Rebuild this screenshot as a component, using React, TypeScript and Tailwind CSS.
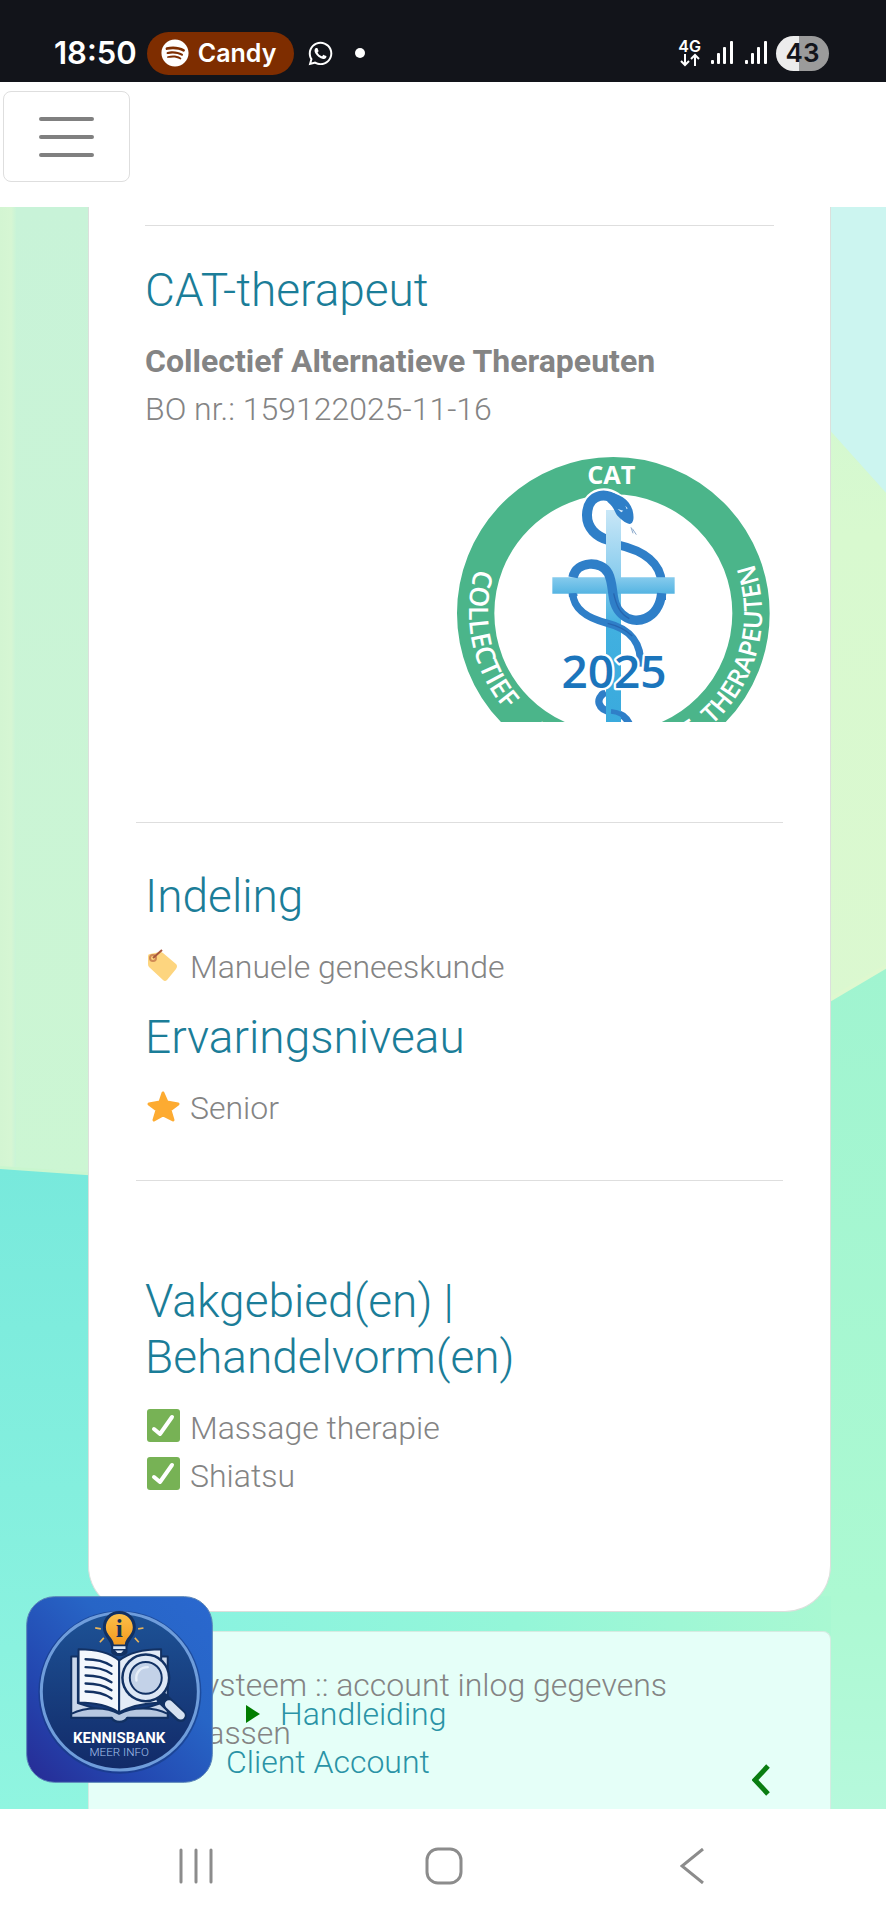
import React from "react";
import { FaSpotify, FaWhatsapp } from "react-icons/fa";

const treatments = ["Massage therapie", "Shiatsu"];

function SignalBars() {
  return (
    <svg viewBox="0 0 22 24" className="h-6 w-[22px]" fill="#fff">
      <rect x="0" y="19" width="3" height="4" rx="1" />
      <rect x="6" y="12" width="3" height="11" rx="1" />
      <rect x="12" y="6" width="3" height="17" rx="1" />
      <rect x="19" y="0" width="3" height="23" rx="1" />
    </svg>
  );
}

function StatusBar() {
  return (
    <div className="flex h-[82px] items-center justify-between bg-[#12141a] pt-6 pr-[57px] pl-[54px] font-['Inter',sans-serif] font-semibold text-white">
      <div className="flex items-center">
        <span className="text-[31px] leading-10">18:50</span>
        <div className="ml-[10px] flex h-[43px] items-center gap-[9px] rounded-full bg-[#7e2d00] pr-[18px] pl-[14px]">
          <FaSpotify className="size-7" />
          <span className="text-[25px] leading-8">Candy</span>
        </div>
        <FaWhatsapp className="ml-[13px] size-[27px]" />
        <span className="ml-[21px] size-[10px] rounded-full bg-white" />
      </div>
      <div className="flex items-center">
        <div className="flex flex-col items-center">
          <span className="text-base leading-[14px]">4G</span>
          <svg
            viewBox="0 0 20 14"
            className="h-[14px] w-5"
            fill="none"
            stroke="#fff"
            strokeWidth="2"
          >
            <path d="M5 1v11M1 8l4 4 4-4M15 13V2M11 6l4-4 4 4" />
          </svg>
        </div>
        <div className="ml-[10px] flex gap-3">
          <SignalBars />
          <SignalBars />
        </div>
        <div className="ml-[9px] flex h-[35px] w-[53px] items-center justify-center rounded-full bg-linear-to-r from-[#ececec] from-43% to-[#9b9b9b] to-43% text-[26px] text-[#12141a]">
          43
        </div>
      </div>
    </div>
  );
}

function Background() {
  return (
    <svg
      viewBox="0 0 886 1603"
      preserveAspectRatio="none"
      className="absolute inset-0 h-full w-full"
      aria-hidden="true"
    >
      <defs>
        <linearGradient id="mint" x1="0" y1="0" x2="0" y2="1">
          <stop offset="0" stopColor="#c8f3d8" />
          <stop offset="1" stopColor="#ccf6d3" />
        </linearGradient>
        <linearGradient id="turquoise" x1="0" y1="0" x2="0" y2="1">
          <stop offset="0" stopColor="#78e9dc" />
          <stop offset="1" stopColor="#90f5e0" />
        </linearGradient>
        <linearGradient id="lime" x1="0" y1="0" x2="0" y2="1">
          <stop offset="0" stopColor="#cdf7d2" />
          <stop offset="0.4" stopColor="#d8f9cf" />
          <stop offset="1" stopColor="#dbf8d0" />
        </linearGradient>
        <linearGradient id="green" x1="0" y1="0" x2="0" y2="1">
          <stop offset="0" stopColor="#a0f4d0" />
          <stop offset="0.75" stopColor="#acf9d2" />
          <stop offset="1" stopColor="#b6f9dc" />
        </linearGradient>
        <linearGradient id="seam" x1="0" y1="0" x2="1" y2="0">
          <stop offset="0" stopColor="#8af3e0" />
          <stop offset="0.5" stopColor="#94f6d8" />
          <stop offset="1" stopColor="#a9f8d2" />
        </linearGradient>
        <linearGradient id="edge" x1="0" y1="0" x2="1" y2="0">
          <stop offset="0" stopColor="#d3f5d2" />
          <stop offset="0.7" stopColor="#d6f6d3" />
          <stop offset="1" stopColor="#c9f4d7" />
        </linearGradient>
      </defs>
      <rect width="443" height="980" fill="url(#mint)" />
      <rect width="16" height="970" fill="url(#edge)" />
      <path d="M0 961L443 990V1603H0z" fill="url(#turquoise)" />
      <path d="M0 961L100 968" stroke="#c9f6cf" strokeWidth="3" />
      <rect x="443" width="443" height="820" fill="url(#lime)" />
      <path d="M800 0H886V286L800 190z" fill="#ccf5f0" />
      <path d="M443 1052L831 792L886 760V1603H443z" fill="url(#green)" />
      <path d="M825 796L886 760" stroke="#def8cf" strokeWidth="4" />
      <rect x="200" y="1390" width="631" height="60" fill="url(#seam)" />
    </svg>
  );
}

function CatLogo() {
  return (
    <svg
      viewBox="78 51 939 795"
      className="mr-1 h-[265px] w-[313px]"
      role="img"
      aria-label="CAT 2025"
    >
      <defs>
        <linearGradient id="pole" x1="0" y1="0" x2="0" y2="1">
          <stop offset="0" stopColor="#c9e7f7" />
          <stop offset="0.3" stopColor="#8bcdee" />
          <stop offset="0.55" stopColor="#41b0e0" />
          <stop offset="1" stopColor="#3aaadd" />
        </linearGradient>
        <linearGradient id="beam" x1="0" y1="0" x2="0" y2="1">
          <stop offset="0" stopColor="#86cbed" />
          <stop offset="1" stopColor="#55b4e2" />
        </linearGradient>
        <path id="arcLeft" d="M454 84A446 446 0 0 0 640 956" />
        <path id="arcBottom" d="M101 520A446 446 0 0 0 993 520" />
        <path id="arcRight" d="M435 952A446 446 0 0 0 659 88" />
      </defs>
      <circle cx="547" cy="520" r="413" fill="#fff" stroke="#4bb58a" strokeWidth="112" />
      <g
        fill="#fff"
        fontFamily="'Open Sans', sans-serif"
        fontWeight="600"
        fontSize="80"
        textAnchor="middle"
      >
        <text x="541" y="132" fontWeight="700" fontSize="76">CAT</text>
        <text>
          <textPath href="#arcLeft" startOffset="50%">COLLECTIEF</textPath>
        </text>
        <text>
          <textPath href="#arcBottom" startOffset="50%">ALTERNATIEVE</textPath>
        </text>
        <text fontSize="76">
          <textPath href="#arcRight" startOffset="50%">THERAPEUTEN</textPath>
        </text>
      </g>

      {/* snake, parts behind the cross */}
      <g fill="none" stroke="#2f7fc8">
        <path
          d="M562 186C535 152 470 158 468 224C467 264 496 290 532 300"
          stroke="#fff"
          strokeWidth="42"
        />
        <path
          d="M562 190C535 152 470 158 468 224C467 264 496 290 532 300"
          strokeWidth="30"
        />
        <path d="M560 314C640 332 690 370 692 430V480" strokeWidth="26" />
        <path d="M426 415C422 440 424 450 427 470" strokeWidth="26" />
        <path d="M524 756C490 775 500 812 545 816C570 820 586 832 594 850" strokeWidth="22" />
      </g>
      <path d="M525 210H570V850H525z" fill="url(#pole)" />
      <path d="M364 412H731V461H364z" fill="url(#beam)" />

      {/* snake, parts in front */}
      <g fill="none">
        <path
          d="M692 460C684 540 610 560 572 522C536 490 552 440 532 400C512 360 436 362 426 412"
          stroke="#2f7fc8"
          strokeWidth="28"
        />
        <path
          d="M425 460C428 510 470 535 530 550C596 566 634 610 628 680"
          stroke="#2f7fc8"
          strokeWidth="22"
        />
        <path
          d="M548 460C556 495 565 520 595 536M530 550C560 557 585 570 604 588"
          stroke="#2766b0"
          strokeWidth="4"
        />
        <path d="M540 814C565 816 583 828 594 848" stroke="#2f7fc8" strokeWidth="14" />
        <path d="M600 262L606 280M604 266L616 284" stroke="#8aa9cc" strokeWidth="3" />
      </g>
      <path
        d="M515 157C560 154 596 178 605 212C610 232 608 250 596 252C582 250 570 238 558 226C550 214 550 202 530 186z"
        fill="#2f7fc8"
      />
      <path d="M560 207L577 212L571 217zM583 197L590 205L587 208z" fill="#d8ecfa" />
      <text
        x="549"
        y="745"
        textAnchor="middle"
        fontFamily="'Open Sans', sans-serif"
        fontWeight="600"
        fontSize="138"
        fill="#1b75bc"
        stroke="#fff"
        strokeWidth="14"
        strokeLinejoin="round"
        paintOrder="stroke"
      >
        2025
      </text>
    </svg>
  );
}

function KennisbankLogo() {
  return (
    <svg viewBox="18 18 562 562" className="size-[187px]" role="img" aria-label="Kennisbank">
      <defs>
        <linearGradient id="tile" x1="1" y1="0" x2="0" y2="1">
          <stop offset="0" stopColor="#2a68cf" />
          <stop offset="0.35" stopColor="#2765c6" />
          <stop offset="0.7" stopColor="#2347b0" />
          <stop offset="1" stopColor="#272a94" />
        </linearGradient>
        <linearGradient id="disc" x1="0" y1="0" x2="0" y2="1">
          <stop offset="0" stopColor="#1d5296" />
          <stop offset="1" stopColor="#122a68" />
        </linearGradient>
        <linearGradient id="bulb" x1="0" y1="0" x2="0" y2="1">
          <stop offset="0" stopColor="#fcc04a" />
          <stop offset="1" stopColor="#f39a1f" />
        </linearGradient>
      </defs>
      <rect x="20" y="20" width="558" height="558" rx="84" fill="url(#tile)" stroke="#5a86b8" strokeWidth="3" />
      <circle cx="300" cy="307" r="245" fill="#163a80" opacity="0.6" />
      <circle cx="300" cy="305" r="236" fill="url(#disc)" stroke="#6f9ddb" strokeWidth="9" />

      {/* bulb */}
      <path
        d="M298 68C272 68 254 88 254 112C254 140 276 144 279 170V186C284 196 313 196 318 186V170C321 144 343 140 343 112C343 88 325 68 298 68z"
        fill="#123163"
        stroke="#123163"
        strokeWidth="10"
      />
      <path
        d="M298 72C275 72 258 90 258 112C258 136 280 142 282 164H315C317 142 339 136 339 112C339 90 322 72 298 72z"
        fill="url(#bulb)"
      />
      <path d="M280 169H317V177H280zM286 182H311L304 189H293z" fill="#dbe6f5" />
      <text
        x="298"
        y="142"
        textAnchor="middle"
        fontFamily="'Liberation Serif', serif"
        fontWeight="700"
        fontSize="76"
        fill="#153057"
      >
        i
      </text>
      <path
        d="M226 114L243 117M371 114L355 117M240 157L252 144M357 157L345 144"
        stroke="#e9b45a"
        strokeWidth="5"
      />

      {/* book */}
      <g stroke="#123163" strokeWidth="6" strokeLinejoin="round">
        <path d="M154 200H174V340L300 380L424 340V200H444V384H322C314 400 284 400 276 384H154z" fill="#c9d6ea" />
        <path d="M154 372C200 350 260 352 298 372C336 352 400 350 444 372V384H322C314 400 284 400 276 384H154z" fill="#b6c7e0" />
        <path d="M176 178C220 178 266 184 298 212V368C262 344 220 338 176 338z" fill="#f3f7fd" />
        <path d="M298 212C330 186 376 178 424 178V338C376 340 336 346 298 368z" fill="#e3ebf7" />
      </g>
      <g fill="none" stroke="#123163" strokeWidth="7" strokeLinecap="round">
        <path d="M197 208C226 208 254 214 275 228" />
        <path d="M197 232C226 232 254 238 275 252" />
        <path d="M197 257C226 257 254 263 275 277" />
        <path d="M197 281C226 281 254 287 275 301" />
        <path d="M197 305C226 305 254 311 275 326" />
      </g>

      {/* magnifier */}
      <path d="M428 326L482 378" stroke="#123163" strokeWidth="38" strokeLinecap="round" />
      <path d="M448 344L483 377" stroke="#d6e1f1" strokeWidth="25" strokeLinecap="round" />
      <circle cx="378" cy="264" r="74" fill="#123163" />
      <circle cx="378" cy="264" r="57" fill="#c3d2e8" stroke="#dde7f5" strokeWidth="19" />
      <circle cx="378" cy="264" r="48" fill="#c3d2e8" stroke="#123163" strokeWidth="6" />
      <path d="M350 272C346 248 362 232 384 232" fill="none" stroke="#e6eef9" strokeWidth="7" strokeLinecap="round" />

      <g textAnchor="middle" fontFamily="Roboto, sans-serif">
        <text x="298" y="460" fontWeight="700" fontSize="45" fill="#fff">
          KENNISBANK
        </text>
        <text x="298" y="500" fontSize="35" fill="#a7c3ec">
          MEER INFO
        </text>
      </g>
    </svg>
  );
}

function TagIcon() {
  return (
    <svg viewBox="0 0 35 48" className="h-12 w-[35px]" aria-hidden="true">
      <path
        d="M5 11L15 9Q17 9 18 10L31 21Q33 23 31 26L22 37Q20 39 18 37L4 24Q3 23 3 21V13Q3 11 5 11z"
        fill="#fdd57f"
      />
      <circle cx="8" cy="15" r="3" fill="none" stroke="#d08a55" strokeWidth="2" />
      <path d="M8 15L17 7" stroke="#a9573c" strokeWidth="2" />
    </svg>
  );
}

function StarIcon() {
  return (
    <svg viewBox="0 0 35 48" className="h-12 w-[35px]" aria-hidden="true">
      <path
        d="M18 9L22 18L33 20L25 26L28 36L18 31L9 36L12 26L4 20L15 18z"
        fill="#fdab31"
        stroke="#fdab31"
        strokeWidth="3"
        strokeLinejoin="round"
      />
    </svg>
  );
}

function CheckIcon() {
  return (
    <svg viewBox="0 0 35 48" className="h-12 w-[35px]" aria-hidden="true">
      <rect x="2" y="5" width="33" height="33" rx="3" fill="#77b255" />
      <path
        d="M9 25L15 30L27 13"
        fill="none"
        stroke="#fff"
        strokeWidth="4"
        strokeLinecap="round"
        strokeLinejoin="round"
      />
    </svg>
  );
}

function Heading({ children }: { children: React.ReactNode }) {
  return (
    <h2 className="mb-[19px] text-[46px] leading-14 text-[#1b7d98]">{children}</h2>
  );
}

export default function App() {
  return (
    <div className="flex min-h-screen flex-col bg-white font-['Roboto',sans-serif] text-[32px] leading-12 font-light text-[#848484]">
      <StatusBar />

      <header className="h-[125px] pt-[9px] pl-[3px]">
        <button
          type="button"
          aria-label="Menu"
          className="flex h-[91px] w-[127px] items-center justify-center rounded-lg border border-[#dedede]"
        >
          <svg viewBox="0 0 56 42" className="h-[42px] w-14">
            <path
              d="M2 3H53M2 21H53M2 39H53"
              stroke="#808080"
              strokeWidth="4"
              strokeLinecap="round"
            />
          </svg>
        </button>
      </header>

      <main className="relative flex flex-1 flex-col overflow-hidden pr-[55px] pl-[88px]">
        <Background />

        <section className="relative rounded-b-[46px] border border-t-0 border-[#dcdfdc] bg-white px-[47px] pt-[18px] pb-[111px]">
          <hr className="mx-[9px] border-[#dedede]" />
          <div className="flex flex-col px-[9px] pt-9 pb-[100px]">
            <Heading>CAT-therapeut</Heading>
            <p className="font-bold">Collectief Alternatieve Therapeuten</p>
            <p>BO nr.: 159122025-11-16</p>
            <div className="mt-6 flex justify-end">
              <CatLogo />
            </div>
          </div>

          <hr className="border-[#dedede]" />
          <div className="px-[9px] pt-[45px] pb-12">
            <Heading>Indeling</Heading>
            <p className="mb-[18px] flex gap-2.5">
              <TagIcon />
              Manuele geneeskunde
            </p>
            <Heading>Ervaringsniveau</Heading>
            <p className="flex gap-2.5">
              <StarIcon />
              Senior
            </p>
          </div>

          <hr className="border-[#dedede]" />
          <div className="px-[9px] pt-[92px]">
            <Heading>
              Vakgebied(en) |<br />
              Behandelvorm(en)
            </Heading>
            <ul>
              {treatments.map((name) => (
                <li key={name} className="flex gap-2.5">
                  <CheckIcon />
                  {name}
                </li>
              ))}
            </ul>
          </div>
        </section>

        <section className="relative mt-[19px] flex-1 rounded-t-lg border border-b-0 border-[#d5ebe2] bg-[#e5fff8] px-14 pt-[29px]">
          <p className="pl-10">Systeem :: account inlog gegevens</p>
          <p>toepassen</p>
        </section>

        {/* Floating help menu */}
        <div className="absolute bottom-[23px] left-[26px] flex items-end gap-[13px]">
          <a href="#kennisbank" className="mb-[3px]">
            <KennisbankLogo />
          </a>
          <ul className="text-[#2a93a6]">
            <li className="flex items-center gap-5 pl-5">
              <svg viewBox="0 0 14 18" className="h-[18px] w-[14px]" fill="#007d00">
                <path d="M0 0L14 9L0 18z" />
              </svg>
              <a href="#handleiding">Handleiding</a>
            </li>
            <li>
              <a href="#account">Client Account</a>
            </li>
          </ul>
        </div>
        <button
          type="button"
          aria-label="Open zijpaneel"
          className="absolute right-[116px] bottom-[13px]"
        >
          <svg viewBox="0 0 18 32" className="h-8 w-[18px]">
            <path d="M16 2L3 16L16 30" fill="none" stroke="#0a7d12" strokeWidth="5" />
          </svg>
        </button>
      </main>

      <nav className="grid h-[111px] grid-cols-3 items-center justify-items-center pt-0.5 pr-[70px] pl-[72px]">
        <button type="button" aria-label="Recente apps">
          <svg viewBox="0 0 36 36" className="size-9" stroke="#8c8c8c" strokeWidth="3" strokeLinecap="round">
            <path d="M3 2V34M18 2V34M33 2V34" />
          </svg>
        </button>
        <button type="button" aria-label="Startscherm">
          <svg viewBox="0 0 38 38" className="size-[38px]" fill="none" stroke="#8c8c8c" strokeWidth="3">
            <rect x="2" y="2" width="34" height="34" rx="11" />
          </svg>
        </button>
        <button type="button" aria-label="Terug">
          <svg viewBox="0 0 24 36" className="h-9 w-6" fill="none" stroke="#8c8c8c" strokeWidth="3">
            <path d="M23 1L2 18L23 35" />
          </svg>
        </button>
      </nav>
    </div>
  );
}
